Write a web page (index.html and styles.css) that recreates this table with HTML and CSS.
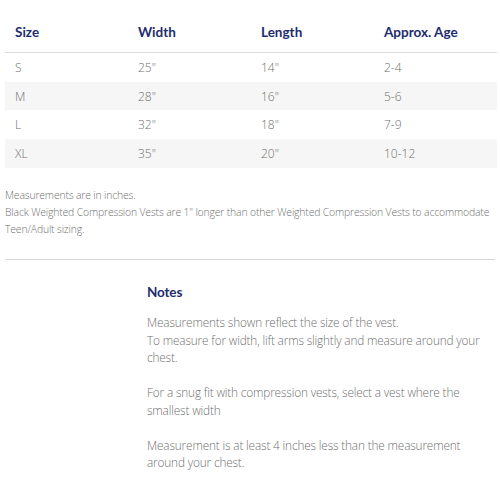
FILE: index.html
```html
<!DOCTYPE html>
<html>
<head>
<meta charset="utf-8">
<link rel="stylesheet" href="styles.css">
</head>
<body>
<div class="page">
  <div class="table">
    <div class="row head">
      <div>Size</div><div>Width</div><div>Length</div><div>Approx. Age</div>
    </div>
    <div class="row">
      <div>S</div><div>25"</div><div>14"</div><div>2-4</div>
    </div>
    <div class="row alt">
      <div>M</div><div>28"</div><div>16"</div><div>5-6</div>
    </div>
    <div class="row">
      <div>L</div><div>32"</div><div>18"</div><div>7-9</div>
    </div>
    <div class="row alt">
      <div>XL</div><div>35"</div><div>20"</div><div>10-12</div>
    </div>
  </div>
  <div class="foot">
    <p>Measurements are in inches.</p>
    <p>Black Weighted Compression Vests are 1" longer than other Weighted Compression Vests to accommodate Teen/Adult sizing.</p>
  </div>
  <hr class="rule">
  <div class="notes">
    <h3>Notes</h3>
    <p>Measurements shown reflect the size of the vest.<br>To measure for width, lift arms slightly and measure around your chest.</p>
    <p>For a snug fit with compression vests, select a vest where the smallest width</p>
    <p>Measurement is at least 4 inches less than the measurement around your chest.</p>
  </div>
</div>
</body>
</html>
```
FILE: styles.css
```css
* { box-sizing: border-box; }
body {
  margin: 0;
  background: #fff;
  font-family: "Open Sans", "Liberation Sans", sans-serif;
  color: #6f6f6f;
}
.page { padding: 13px 3px 0 5px; }
.table { width: 492px; }
.row {
  display: grid;
  grid-template-columns: 123px 123px 123px 123px;
  height: 28.7px;
  align-items: center;
  font-size: 12px;
  font-weight: 300;
  color: #707070;
}
.row > div { padding-left: 10px; }
.row.head {
  height: 40px;
  border-bottom: 1px solid #dedede;
  font-family: "Lato", "Open Sans", sans-serif;
  font-weight: 700;
  font-size: 13.5px;
  color: #1d2c6e;
  padding-bottom: 1px;
}
.row.alt { background: #f6f6f6; }
.foot {
  margin-top: 19px;
  font-size: 10.4px;
  letter-spacing: -0.15px;
  font-weight: 300;
  line-height: 17px;
  color: #707070;
}
.foot p { margin: 0; }
.rule {
  margin: 21px 0 0 0;
  width: 490px;
  border: 0;
  border-top: 1px solid #d6d6d6;
}
.notes {
  margin-left: 142px;
  padding-top: 24px;
  font-size: 11.8px;
  letter-spacing: -0.15px;
  font-weight: 300;
  line-height: 17.5px;
  color: #707070;
}
.notes h3 {
  margin: 0 0 13px 0;
  font-family: "Lato", "Open Sans", sans-serif;
  font-weight: 700;
  font-size: 13.5px;
  color: #1d2c6e;
}
.notes p { margin: 0 0 17.5px 0; }
```
